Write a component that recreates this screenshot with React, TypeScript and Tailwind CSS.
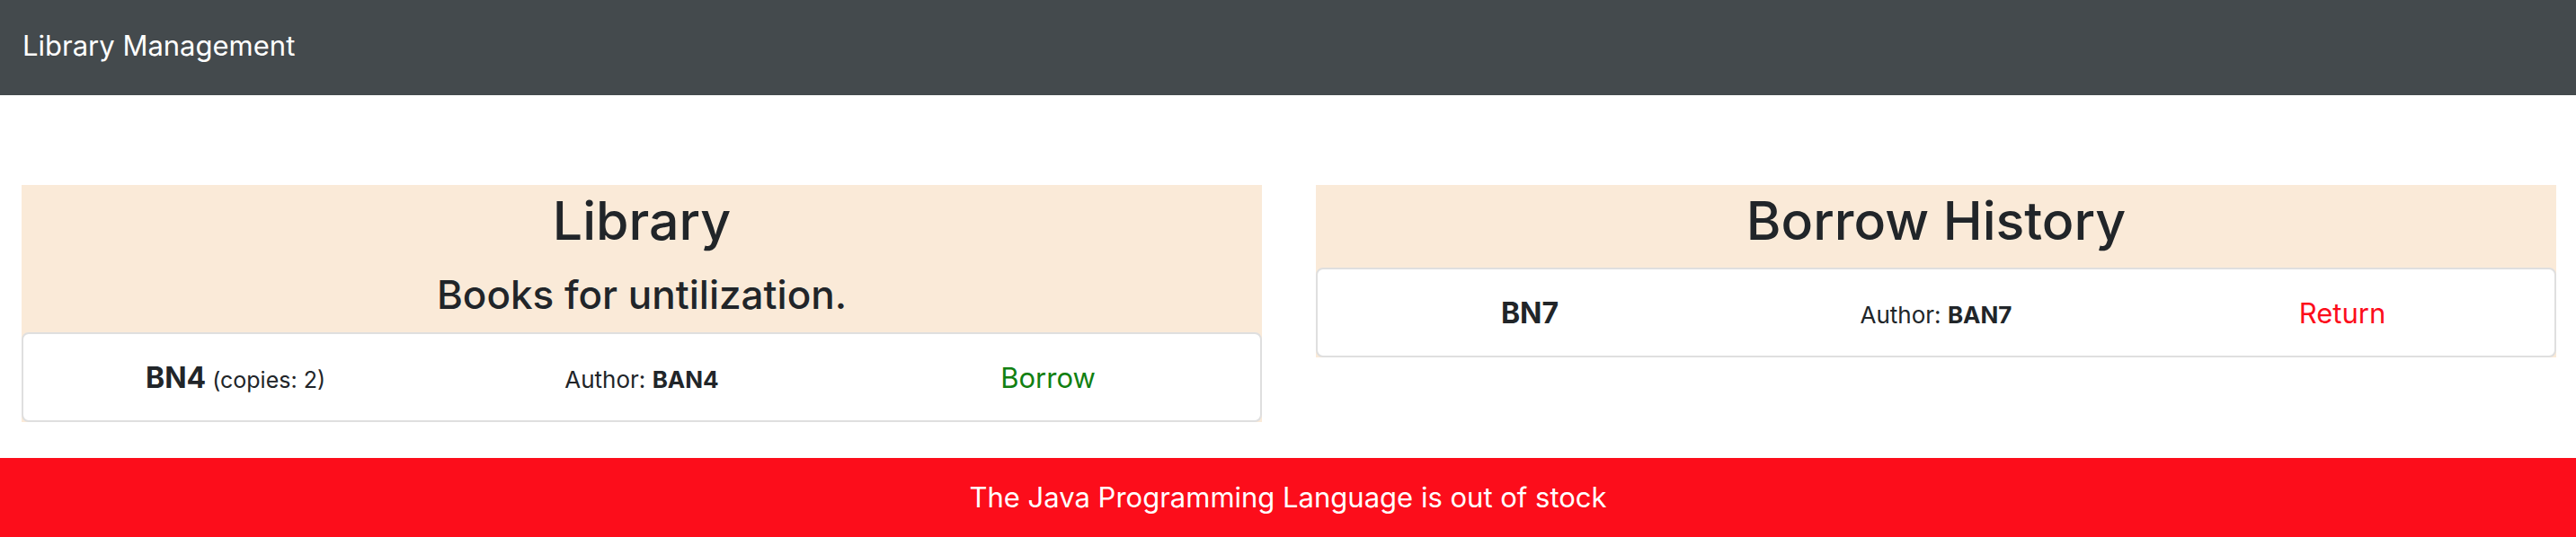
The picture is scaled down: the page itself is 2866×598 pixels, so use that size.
type BookRowProps = {
  title: string;
  copies?: number;
  author: string;
  action: string;
  tone: string;
};

function BookRow({ title, copies, author, action, tone }: BookRowProps) {
  return (
    <li className="grid grid-cols-3 items-baseline rounded-lg border-2 border-[#dfdfdf] bg-white px-2.5 pt-[25px] pb-[23px] text-center">
      <div className="text-[32px] leading-12">
        <strong className="font-bold">{title}</strong>
        {copies !== undefined && <span className="text-[25px] leading-none"> (copies: {copies})</span>}
      </div>
      <div className="text-[26px] leading-none">
        Author: <strong className="font-bold">{author}</strong>
      </div>
      <div className="text-[31px] leading-12">
        <button type="button" className={tone}>
          {action}
        </button>
      </div>
    </li>
  );
}

export default function App() {
  return (
    <div className="font-['Inter',sans-serif] text-[#212529]">
      <header className="bg-[#444a4d] px-[25px] pt-[27px] pb-[31px] text-[31px] leading-12 text-white">
        <a href="#">Library Management</a>
      </header>
      <main className="grid grid-cols-2 items-start gap-15 pt-25 pr-[22px] pb-10 pl-6">
        <section className="bg-[#faead8] text-center">
          <h1 className="pb-3 text-[59px] leading-20 font-medium">Library</h1>
          <h2 className="pb-3 text-[44px] leading-15 font-medium">Books for untilization.</h2>
          <ul>
            <BookRow title="BN4" copies={2} author="BAN4" action="Borrow" tone="text-[#118011]" />
          </ul>
        </section>
        <section className="bg-[#faead8] text-center">
          <h1 className="pb-3 text-[59px] leading-20 font-medium">Borrow History</h1>
          <ul>
            <BookRow title="BN7" author="BAN7" action="Return" tone="text-[#fc0d1b]" />
          </ul>
        </section>
      </main>
      <footer className="bg-[#fc0d1b] py-5 text-center text-[31px] leading-12 text-white">
        The Java Programming Language is out of stock
      </footer>
    </div>
  );
}
